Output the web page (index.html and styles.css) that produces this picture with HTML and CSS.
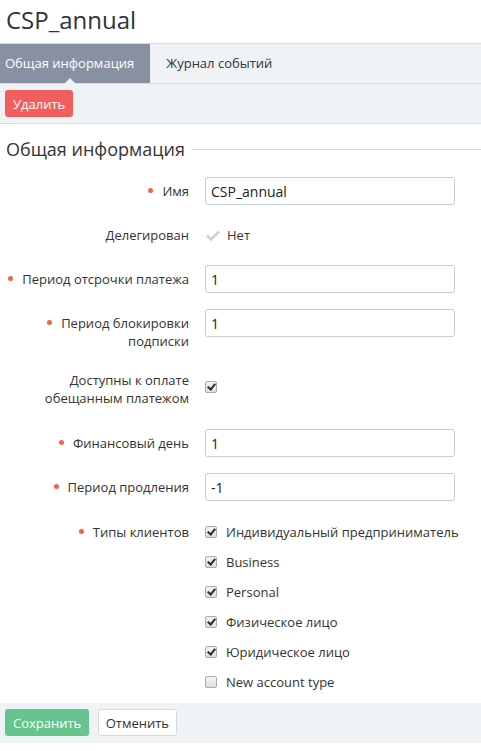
FILE: index.html
```html
<!DOCTYPE html>
<html lang="ru">
<head>
  <meta charset="UTF-8">
  <meta name="viewport" content="width=device-width, initial-scale=1.0">
  <title>CSP_annual</title>
  <link rel="stylesheet" href="styles.css">
</head>
<body>
  <h1 class="page-title">CSP_annual</h1>

  <div class="tabs">
    <div class="tab active">Общая информация</div>
    <div class="tab">Журнал событий</div>
  </div>

  <div class="toolbar">
    <button type="button" class="btn btn-danger">Удалить</button>
  </div>

  <form class="form">
    <div class="section-title"><span>Общая информация</span></div>

    <div class="row">
      <label class="label required">Имя</label>
      <div class="value"><input type="text" value="CSP_annual"></div>
    </div>

    <div class="row">
      <label class="label">Делегирован</label>
      <div class="value static">
        <svg class="tick" width="14" height="11" viewBox="0 0 14 11"><path d="M1 5.5l4 4L13 1.5" fill="none" stroke="#c9d0d8" stroke-width="2.6"/></svg>
        Нет
      </div>
    </div>

    <div class="row">
      <label class="label required">Период отсрочки платежа</label>
      <div class="value"><input type="text" value="1"></div>
    </div>

    <div class="row">
      <label class="label required">Период блокировки<br>подписки</label>
      <div class="value"><input type="text" value="1"></div>
    </div>

    <div class="row row-wide">
      <label class="label">Доступны к оплате<br>обещанным платежом</label>
      <div class="value check-only"><span class="cb checked"></span></div>
    </div>

    <div class="row">
      <label class="label required">Финансовый день</label>
      <div class="value"><input type="text" value="1"></div>
    </div>

    <div class="row">
      <label class="label required">Период продления</label>
      <div class="value"><input type="text" value="-1"></div>
    </div>

    <div class="row row-last">
      <label class="label required list-label">Типы клиентов</label>
      <div class="value">
        <div class="check-item"><span class="cb checked"></span>Индивидуальный предприниматель</div>
        <div class="check-item"><span class="cb checked"></span>Business</div>
        <div class="check-item"><span class="cb checked"></span>Personal</div>
        <div class="check-item"><span class="cb checked"></span>Физическое лицо</div>
        <div class="check-item"><span class="cb checked"></span>Юридическое лицо</div>
        <div class="check-item"><span class="cb"></span>New account type</div>
      </div>
    </div>
  </form>

  <div class="footer">
    <button type="button" class="btn btn-success">Сохранить</button>
    <button type="button" class="btn btn-default">Отменить</button>
  </div>
</body>
</html>
```

FILE: styles.css
```css
body {
  margin: 0;
  font-family: "Open Sans", Arial, sans-serif;
  font-size: 13px;
  color: #333;
  background: #fff;
}
.page-title {
  margin: 0;
  padding: 3px 6px 0;
  height: 40px;
  font-size: 24px;
  font-weight: normal;
  line-height: 34px;
  color: #2f3337;
}
.tabs {
  display: flex;
  height: 39px;
  border-top: 1px solid #d7dce2;
  border-bottom: 1px solid #d7dce2;
  background: #f0f3f6;
}
.tab {
  position: relative;
  padding: 0 16px 0 5px;
  line-height: 39px;
  color: #333;
}
.tab + .tab {
  padding-left: 16px;
}
.tab.active {
  background: #8891a2;
  color: #fff;
}
.tab.active::after {
  content: "";
  position: absolute;
  left: 64px;
  bottom: -1px;
  border: 6px solid transparent;
  border-bottom-color: #f0f3f6;
  border-top: 0;
}
.toolbar {
  background: #f0f3f6;
  border-bottom: 1px solid #d7dce2;
  padding: 6px 5px 0;
  box-sizing: border-box;
  height: 40px;
}
.btn {
  font-family: "Open Sans", Arial, sans-serif;
  font-size: 13px;
  height: 27px;
  padding: 0 7px;
  border-radius: 3px;
  border: 1px solid transparent;
  cursor: pointer;
}
.btn-danger {
  background: #f35d5e;
  color: #fff;
}
.btn-success {
  background: #66c48e;
  color: #fff;
}
.btn-default {
  background: #fff;
  border-color: #d3d8de;
  color: #333;
  margin-left: 5px;
}
.form {
  padding: 12px 0 6px;
}
.section-title {
  display: flex;
  align-items: center;
  margin: 0 0 15px 6px;
  font-size: 18px;
  line-height: 26px;
  color: #333;
}
.section-title::after {
  content: "";
  flex: 1;
  height: 1px;
  background: #d7dce2;
  margin-left: 6px;
}
.row {
  display: grid;
  grid-template-columns: 189px 250px;
  column-gap: 16px;
  margin-bottom: 16px;
}
.row-wide {
  margin-bottom: 22px;
}
.row-last {
  margin-bottom: 0;
}
.label {
  text-align: right;
  line-height: 18px;
  padding-top: 5px;
  color: #333;
}
.label.list-label {
  padding-top: 6px;
}
.required::before {
  content: "";
  display: inline-block;
  width: 5px;
  height: 5px;
  border-radius: 50%;
  background: #f0653a;
  margin-right: 9px;
  vertical-align: 3px;
}
.value input {
  box-sizing: border-box;
  width: 250px;
  height: 28px;
  padding: 0 5px;
  border: 1px solid #c5ccd5;
  border-radius: 3px;
  font-family: "Open Sans", Arial, sans-serif;
  font-size: 14px;
  color: #222;
}
.static {
  display: flex;
  align-items: center;
  gap: 7px;
  height: 28px;
  font-size: 13px;
}
.tick {
  margin-left: 1px;
}
.check-only {
  padding-top: 10px;
}
.cb {
  display: inline-block;
  position: relative;
  flex: none;
  box-sizing: border-box;
  width: 12px;
  height: 12px;
  border: 1px solid #a9a9a9;
  border-radius: 2px;
  background: linear-gradient(#f4f4f4, #dedede);
  vertical-align: middle;
}
.cb.checked::after {
  content: "";
  position: absolute;
  left: 3px;
  top: 0;
  width: 3px;
  height: 6px;
  border: solid #2b2b2b;
  border-width: 0 2px 2px 0;
  transform: rotate(40deg);
}
.check-item {
  display: flex;
  align-items: center;
  gap: 9px;
  height: 30px;
  font-size: 13px;
  white-space: nowrap;
}
.footer {
  background: #f0f3f6;
  padding: 6px 5px;
  box-sizing: border-box;
  height: 40px;
}
```
